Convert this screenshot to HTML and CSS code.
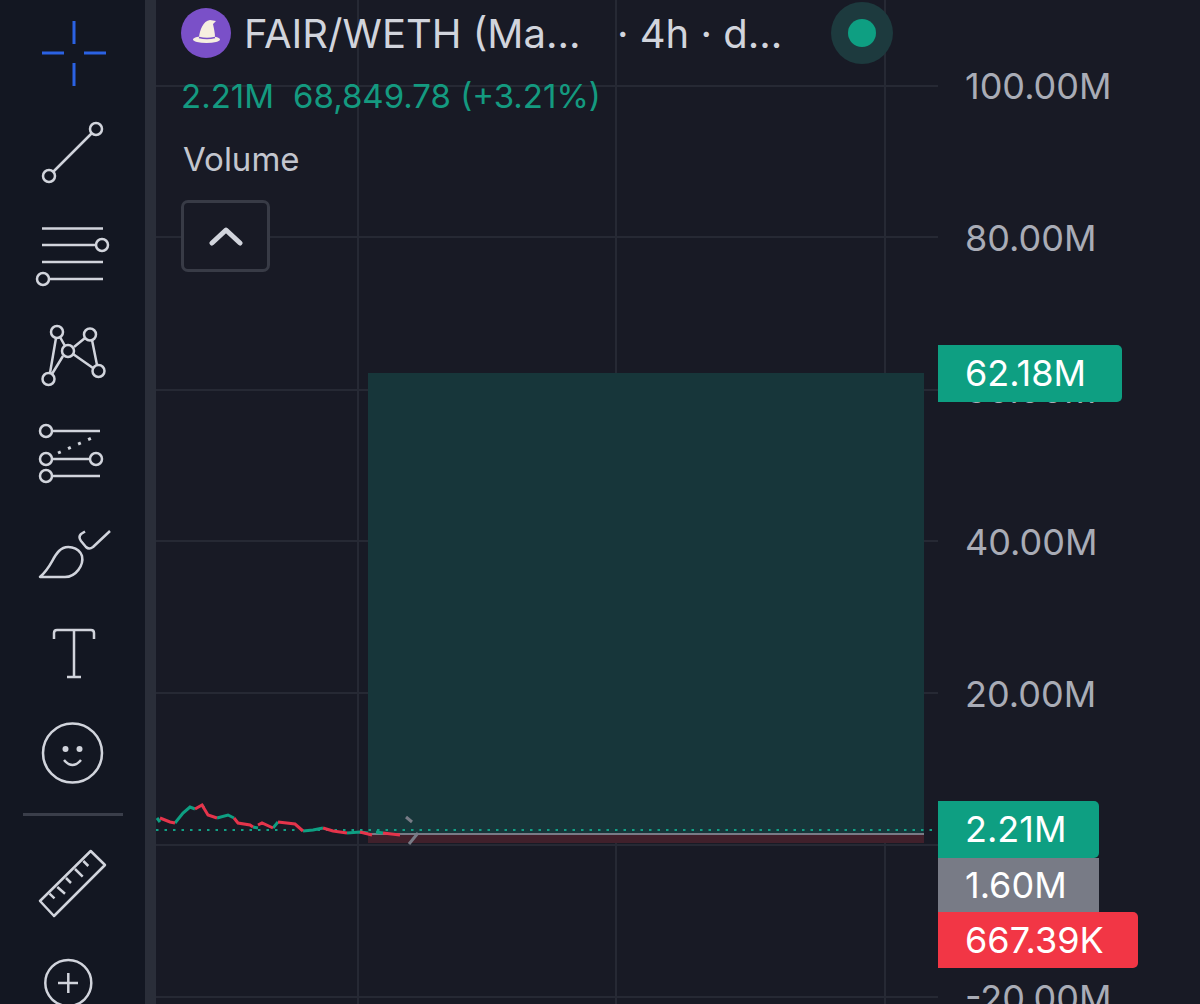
FILE: index.html
```html
<!DOCTYPE html>
<html>
<head lang="en">
    <meta charset="UTF-8">
    <meta name="viewport" content="width=device-width, initial-scale=1">
    <title>FAIR/WETH</title>
    <link rel="stylesheet" href="styles.css">
</head>
<body>
    <aside class="toolbar">
        <svg class="tool tool-active" viewBox="33 13 80 80">
            <path d="M74 21V44M74 63V86M42 53H64M84 53H106"/>
        </svg>
        <svg class="tool" viewBox="33 113 80 80">
            <path d="M53.5 171.500L91.500 133.500"/>
            <circle cx="96" cy="129" r="6"/>
            <circle cx="49" cy="176" r="6"/>
        </svg>
        <svg class="tool" viewBox="33 211 80 80">
            <path d="M42 226.500H103M42 243H96M42 260H103M49 277H103"/>
            <circle cx="102" cy="243" r="6"/>
            <circle cx="43" cy="277" r="6"/>
        </svg>
        <svg class="tool" viewBox="33 311 80 80">
            <path d="M56 336L50 371M60 335L65 344M63 354L52 372M74 345L85 336M92 338L97 363M73 352L93 366"/>
            <circle cx="57" cy="330" r="6"/>
            <circle cx="90" cy="332.500" r="6"/>
            <circle cx="68" cy="349" r="6"/>
            <circle cx="98.500" cy="369" r="6"/>
            <circle cx="48.500" cy="377" r="6"/>
        </svg>
        <svg class="tool" viewBox="33 415 80 80">
            <path d="M52 433H100M52 461H90M52 478H100"/>
            <path class="dots" d="M58 455L96 438"/>
            <circle cx="46" cy="433" r="6"/>
            <circle cx="46" cy="461" r="6"/>
            <circle cx="96" cy="461" r="6"/>
            <circle cx="46" cy="478" r="6"/>
        </svg>
        <svg class="tool" viewBox="33 515 80 80">
            <path d="M40 579H65C76 579 84 567 82 558C79 549 66 546 59 553C52 560 52 568 40 579Z"/>
            <path d="M85 533.500L81 536Q78 539 81 543L86 549Q89 552 93 549L110 533"/>
        </svg>
        <svg class="tool" viewBox="33 615 80 80">
            <path d="M54 641V635Q54 632 57 632H91Q94 632 94 635V641M74 632V679M67 679H81"/>
        </svg>
        <svg class="tool" viewBox="33 715 80 80">
            <circle cx="72.500" cy="755" r="29.500"/>
            <circle class="solid" cx="65.500" cy="751" r="3"/>
            <circle class="solid" cx="79.500" cy="751" r="3"/>
            <path d="M64 762Q72.500 772 81 762"/>
        </svg>
        <div class="tool-sep"></div>
        <svg class="tool" viewBox="33 852 80 80">
            <path d="M90.700 860L105 874L54 925L40 910Z"/>
            <path d="M49.500 902.700L54.500 907.300M57.300 896L65 902.700M66 887L71 892M75 878L82.700 885.700M83.300 870L88.300 875"/>
        </svg>
        <svg class="tool" viewBox="33 949 80 80">
            <circle cx="68.300" cy="989" r="23"/>
            <path d="M58 989H78M68.300 979V999"/>
        </svg>
    </aside>

    <div class="split"></div>

    <main class="chart">
        <svg class="plot" viewBox="156 0 1044 1004">
            <path class="grid" d="M156 86H938M156 237H938M156 390H938M156 541H938M156 693H938M156 845H938M156 997H938M358 0V1004M616 0V1004M885 0V1004"/>
            <rect class="zone-up" x="368" y="373" width="556" height="460"/>
            <rect class="zone-down" x="368" y="835" width="556" height="8"/>
            <path class="entry" d="M368 834H924"/>
            <path class="last" d="M156 830H938"/>
            <path class="bars-up" d="M157 818L160 822M175 823L183 813L190 807L195 809M202 805L204 808M217 818L228 815L234 818M253 827L258 828M273 828L278 822M303 831L313 830L323 828M347 833L360 832L368 833M376 832L383 833"/>
            <path class="bars-down" d="M160 818L170 822L175 823M195 809L202 805L208 815L217 818M234 818L238 823L250 825L253 827M258 825L262 823L273 828M278 822L295 824L303 831M323 828L333 831L347 833M360 832L372 835M383 833L400 835"/>
            <path class="arrow" d="M406 817L412 822M409 844L418 833"/>
        </svg>

        <div class="legend">
            <div class="legend-title">
                <svg class="coin" viewBox="181 8 50 50">
                    <circle class="coin-bg" cx="206" cy="33" r="25"/>
                    <path class="coin-hat" d="M199 37C200 30 203 21 210 20L216 21L213 24C214 29 215 33 215 37Z"/>
                    <ellipse class="coin-hat" cx="206.500" cy="39.500" rx="13.500" ry="3.500"/>
                    <path class="coin-band" d="M199 37.500Q207 39.500 215 37.500"/>
                </svg>
                <span class="pair">FAIR/WETH (Ma...</span>
                <span class="meta">· 4h · d...</span>
                <span class="status"><i></i></span>
            </div>
            <div class="legend-values">
                <span>2.21M</span>
                <span>68,849.78 (+3.21%)</span>
            </div>
            <div class="legend-name">Volume</div>
            <div class="collapse">
                <svg viewBox="0 0 34 20"><path d="M3 17L17 4L31 17"/></svg>
            </div>
        </div>

        <div class="scale">
            <span>100.00M</span>
            <span>80.00M</span>
            <span>60.00M</span>
            <span>40.00M</span>
            <span>20.00M</span>
            <span>0.00</span>
            <span>-20.00M</span>
        </div>

        <div class="tag tag-target">62.18M</div>
        <div class="tag-stack">
            <div class="tag tag-last">2.21M</div>
            <div class="tag tag-entry">1.60M</div>
            <div class="tag tag-stop">667.39K</div>
        </div>
    </main>
</body>
</html>
```

FILE: styles.css
```css
html, body{
    margin: 0;
    padding: 0;
    height: 100%;
    overflow: hidden;
}
body{
    display: flex;
    background-color: #181a25;
    font-family: "Inter", "Liberation Sans", sans-serif;
}

/* left tools */
.toolbar{
    display: flex;
    flex-direction: column;
    align-items: flex-start;
    box-sizing: border-box;
    width: 145px;
    flex: none;
    padding-top: 13px;
    background-color: #131722;
}
.tool{
    display: block;
    flex: none;
    width: 80px;
    height: 80px;
    margin: 0 0 20px 33px;
    fill: none;
    stroke: #d1d4dc;
    stroke-width: 2.5;
    stroke-linejoin: round;
}
.tool-active{
    stroke: #2b62e3;
    stroke-width: 3;
}
.tool .solid{
    fill: #d1d4dc;
    stroke: none;
}
.tool .dots{
    stroke-width: 3;
    stroke-dasharray: 3 8;
}
.tool-sep{
    flex: none;
    width: 100px;
    height: 3px;
    margin: 0 0 27px 23px;
    background-color: #3a3e4a;
}
.split{
    width: 11px;
    flex: none;
    background-color: #2a2e39;
}

/* chart */
.chart{
    position: relative;
    flex: 1;
    height: 1004px;
}
.plot{
    position: absolute;
    left: 0;
    top: 0;
    width: 1044px;
    height: 1004px;
}
.grid{
    fill: none;
    stroke: #262934;
    stroke-width: 2;
}
.zone-up{
    fill: #17363a;
}
.zone-down{
    fill: #40202b;
}
.entry{
    stroke: #787b86;
    stroke-width: 2;
}
.last{
    stroke: #12a085;
    stroke-width: 2;
    stroke-dasharray: 2.500 6;
}
.bars-up, .bars-down{
    fill: none;
    stroke-width: 3;
}
.bars-up{
    stroke: #0e9f82;
}
.bars-down{
    stroke: #e5344b;
}
.arrow{
    fill: none;
    stroke: #787b86;
    stroke-width: 3;
}

/* legend */
.legend{
    position: relative;
    padding: 8px 0 0 25px;
}
.legend-title{
    display: flex;
    align-items: center;
    height: 50px;
    color: #d1d4dc;
    font-size: 40px;
    white-space: nowrap;
}
.coin{
    width: 50px;
    height: 50px;
    flex: none;
    margin-right: 13px;
}
.coin-bg{
    fill: #7a50c8;
}
.coin-hat{
    fill: #f6efe0;
}
.coin-band{
    fill: none;
    stroke: #7a50c8;
    stroke-width: 1.500;
}
.pair{
    width: 373px;
    flex: none;
}
.meta{
    width: 214px;
    flex: none;
}
.status{
    display: flex;
    align-items: center;
    justify-content: center;
    width: 62px;
    height: 62px;
    border-radius: 50%;
    background-color: #1d3a3e;
    flex: none;
}
.status i{
    display: block;
    width: 28px;
    height: 28px;
    border-radius: 50%;
    background-color: #0e9f82;
}
.legend-values{
    display: flex;
    gap: 19px;
    margin-top: 17px;
    height: 42px;
    line-height: 42px;
    color: #149a80;
    font-size: 33px;
}
.legend-name{
    margin-top: 21px;
    padding-left: 2px;
    height: 42px;
    line-height: 42px;
    color: #c3c6ce;
    font-size: 33px;
}
.collapse{
    display: flex;
    align-items: center;
    justify-content: center;
    box-sizing: border-box;
    width: 89px;
    height: 72px;
    margin-top: 20px;
    border: 3px solid #383b46;
    border-radius: 7px;
    background-color: #181a25;
}
.collapse svg{
    width: 34px;
    height: 20px;
    fill: none;
    stroke: #d1d4dc;
    stroke-width: 5;
    stroke-linecap: round;
    stroke-linejoin: round;
}

/* price scale */
.scale{
    position: absolute;
    left: 809px;
    top: 10px;
    display: flex;
    flex-direction: column;
    color: #a9acb6;
    font-size: 36px;
    white-space: nowrap;
}
.scale span{
    display: block;
    height: 152px;
    line-height: 152px;
}
.tag{
    box-sizing: border-box;
    width: 184px;
    height: 57px;
    line-height: 57px;
    padding-left: 27px;
    border-radius: 0 5px 5px 0;
    color: #fff;
    font-size: 36px;
    white-space: nowrap;
}
.tag-target{
    position: absolute;
    left: 782px;
    top: 345px;
    background-color: #0e9f82;
}
.tag-stack{
    position: absolute;
    left: 782px;
    top: 801px;
}
.tag-last{
    width: 161px;
    background-color: #0e9f82;
}
.tag-entry{
    width: 161px;
    height: 54px;
    line-height: 54px;
    border-radius: 0;
    background-color: #787b86;
}
.tag-stop{
    width: 200px;
    height: 56px;
    line-height: 56px;
    background-color: #f23645;
}
```
